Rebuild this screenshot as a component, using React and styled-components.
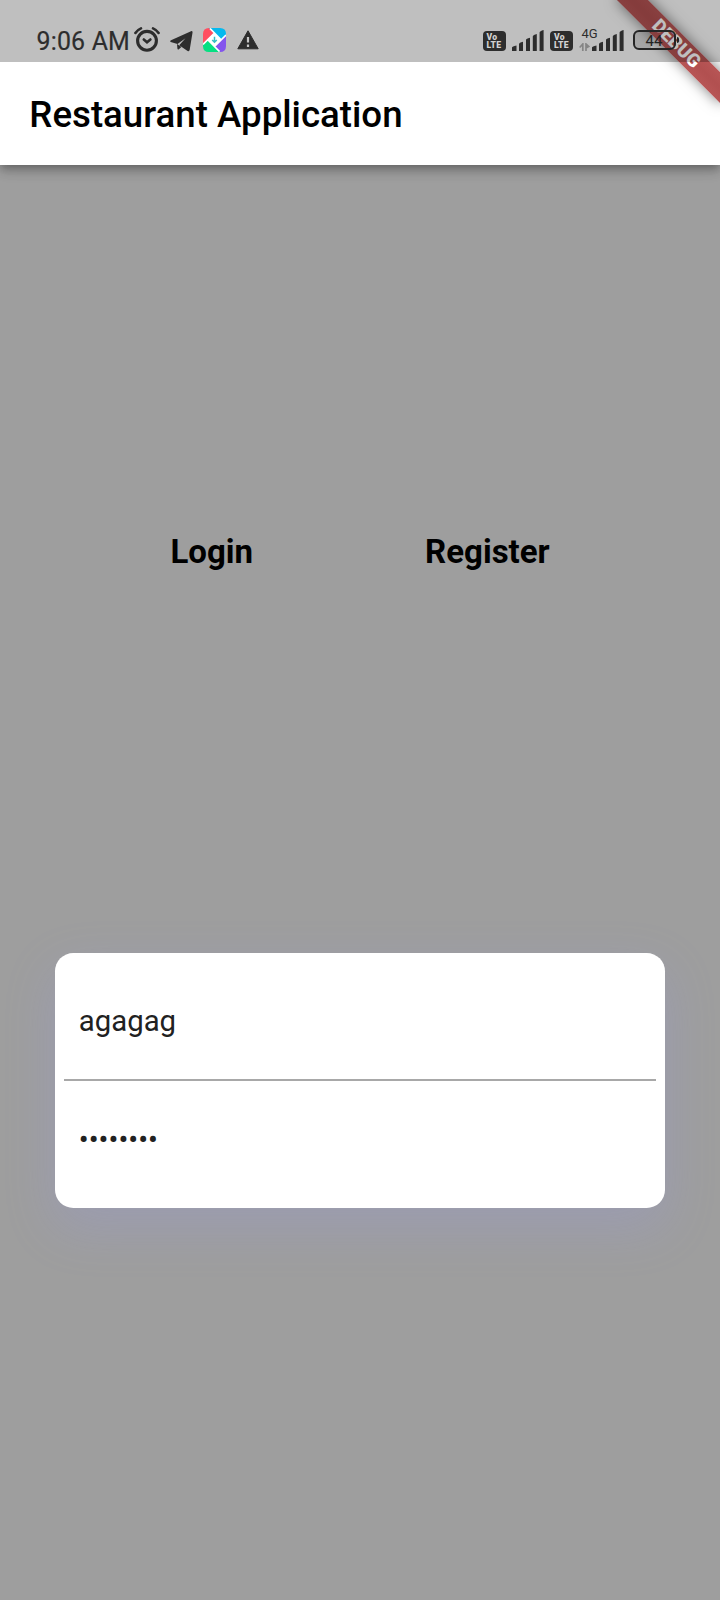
import React from 'react';
import styled, { createGlobalStyle } from 'styled-components';

const GlobalStyle = createGlobalStyle`
  * { box-sizing: border-box; }
  body {
    margin: 0;
    background: #9e9e9e;
    font-family: Roboto, "Liberation Sans", sans-serif;
  }
`;

const Screen = styled.div`
  position: relative;
  display: flex;
  flex-direction: column;
  width: 720px;
  height: 1600px;
  overflow: hidden;
  background: #9e9e9e;
`;

const Header = styled.header`
  position: relative;
  flex: none;
  height: 164.67px;
  background: #fff;
  box-shadow: 0 3.6px 7.3px -1.8px rgba(0, 0, 0, 0.2), 0 7.3px 9.2px rgba(0, 0, 0, 0.14),
    0 1.8px 18.3px rgba(0, 0, 0, 0.12);
`;

const StatusBar = styled.div`
  position: relative;
  z-index: 2;
  display: flex;
  align-items: flex-start;
  height: 62px;
  padding-left: 36.5px;
  background: rgba(0, 0, 0, 0.25);
  color: #2d2d2d;
`;

const Clock = styled.span`
  width: 97.5px;
  margin-top: 27px;
  font-size: 24.9px;
  line-height: 29px;
  letter-spacing: 0.2px;
  white-space: nowrap;
  -webkit-text-stroke: 0.2px #2d2d2d;
`;

const Glyph = styled.svg`
  display: block;
  flex: none;
  width: ${(p) => p.$w}px;
  height: ${(p) => p.$h}px;
  margin-top: ${(p) => p.$top}px;
  margin-left: ${(p) => p.$gap || 0}px;
`;

const VolteBadge = styled.div`
  display: flex;
  flex-direction: column;
  flex: none;
  width: 23px;
  height: 20px;
  margin-top: 30.5px;
  margin-left: ${(p) => p.$gap}px;
  padding: 2px 0 0 4px;
  border-radius: 4px;
  background: #2d2d2d;
  color: #d2d2d2;
  font-size: 8.6px;
  font-weight: 900;
  letter-spacing: 0.3px;
  line-height: 8px;
`;

const Network = styled.div`
  display: flex;
  flex-direction: column;
  flex: none;
  width: 14px;
  margin-left: 6px;
  padding-top: 27px;
  font-size: 13px;
  line-height: 14px;
  span { margin-left: 2.5px; white-space: nowrap; }
`;

const Battery = styled.div`
  position: relative;
  flex: none;
  width: 43px;
  height: 20px;
  margin-top: 30px;
  margin-left: 9px;
  border: 2px solid #252525;
  border-radius: 6px;
  background: linear-gradient(90deg, rgba(0, 0, 0, 0.13) 42%, transparent 42%);
  color: #222;
  font-size: 15px;
  line-height: 18px;
  text-align: center;
  &::after {
    content: '';
    position: absolute;
    right: -5px;
    top: 5px;
    width: 2px;
    height: 6px;
    border-radius: 0 2px 2px 0;
    background: #222;
  }
`;

const Title = styled.h1`
  margin: 0;
  padding-left: 29.33px;
  font-size: 36.67px;
  font-weight: 500;
  line-height: 105px;
  color: #000;
`;

const DebugBanner = styled.div`
  position: absolute;
  z-index: 1;
  top: 51.33px;
  left: 646.67px;
  width: 146.67px;
  height: 22px;
  transform: rotate(45deg);
  transform-origin: 73.33px -51.33px;
  background: linear-gradient(rgba(183, 28, 28, 0.63), rgba(183, 28, 28, 0.63)),
    linear-gradient(rgba(0, 0, 0, 0.28), rgba(0, 0, 0, 0.34), rgba(0, 0, 0, 0.28));
  box-shadow: 0 0 14px rgba(0, 0, 0, 0.5);
  color: #fff;
  font-size: 18.7px;
  font-weight: 900;
  line-height: 22px;
  text-align: center;
`;

const Actions = styled.div`
  display: flex;
  flex: none;
  height: 788px;
  padding: 367px 0 0 170.5px;
  gap: 172px;
`;

const TextButton = styled.button`
  height: 40px;
  padding: 0;
  border: 0;
  background: none;
  color: #000;
  font: 700 33px/40px Roboto, "Liberation Sans", sans-serif;
`;

const Card = styled.form`
  display: flex;
  flex-direction: column;
  flex: none;
  height: 255.3px;
  margin: 0 55px;
  padding: 9.17px;
  border-radius: 18.3px;
  background: #fff;
  box-shadow: 0 18.33px 50px 2px rgba(143, 148, 251, 0.2);
`;

const Field = styled.div`
  display: flex;
  height: ${(p) => (p.$ruled ? 119 : 117)}px;
  padding: 41px 0 0 14.67px;
  border-bottom: ${(p) => (p.$ruled ? '2px solid #a8a8a8' : '0')};
  color: #212121;
  font-size: 29.33px;
  line-height: 36px;
`;

const Value = styled.span`
  white-space: nowrap;
`;

const Signal = ({ gap }) => (
  <Glyph $w={32} $h={21} $top={30} $gap={gap} viewBox="0 0 32 21" fill="#2d2d2d">
    <path d="M0 17.5Q0 16.5 4.5 15.5V21H0zM7 14Q7 12.7 11 11.7V21H7zM14 10Q14 8.8 18 7.8V21H14zM20.8 6.2Q21 5 24.8 4V21H20.8zM27.6 2.5Q27.8 1 31.6 0V21H27.6z" />
  </Glyph>
);

const Volte = ({ gap }) => (
  <VolteBadge $gap={gap}>
    <span>Vo</span>
    <span>LTE</span>
  </VolteBadge>
);

export default function App() {
  return (
    <>
      <GlobalStyle />
      <Screen>
        <Header>
          <StatusBar>
            <Clock>9:06 AM</Clock>
            <Glyph $w={26} $h={25} $top={27} viewBox="0 0 26 25" fill="none" stroke="#2d2d2d" strokeLinecap="round">
              <circle cx="13" cy="13.8" r="9.4" strokeWidth="3.1" />
              <path d="M1.4 6Q3.4 2.9 7 1.4M24.6 6Q22.6 2.9 19 1.4" strokeWidth="2.6" />
              <path d="M9.8 12.5 13 15.3 16.4 12.5" strokeWidth="2.6" />
            </Glyph>
            <Glyph $w={23} $h={21} $top={30.5} $gap={10} viewBox="0 0 23 21" fill="#2d2d2d">
              <path d="M21 .2Q22.8-.3 22.5 1.8L19.7 18.8Q19.3 20.8 17.6 20L9.2 14.3 15.5 7.3 7.5 13 .7 10.9Q-.5 10.2 1 9.2Z" />
              <path d="M7 13 11.4 16 8.6 18.4Q7.6 19 7.4 17.5Z" />
            </Glyph>
            <Glyph $w={23} $h={24} $top={28} $gap={10} viewBox="0 0 23 24">
              <path d="M6 0H6.5L11.5 5 0 16V6Q0 0 6 0Z" fill="#ff4f61" />
              <path d="M6 0H17Q23 0 23 6V7L18 12Z" fill="#05b9ee" />
              <path d="M23 7V18Q23 24 17 24L11.5 18.5Z" fill="#8455ed" />
              <path d="M0 16.5 5 12 17 24H6Q0 24 0 18Z" fill="#06df82" />
              <path d="M11.5 5 18 11.8 11.5 18.5 5 11.8Z" fill="#fff" />
              <path d="M7 .5 18.3 12M23 7 11.5 18.5M16.5 23.5 5 12M0 16.5 11.5 5" fill="none" stroke="#fff" strokeWidth="1.7" />
              <path d="M11.5 8.8V14M9.2 12 11.5 14.2 13.8 12" fill="none" stroke="#36bfc5" strokeWidth="1.5" />
            </Glyph>
            <Glyph $w={22} $h={20} $top={30} $gap={10.5} viewBox="0 0 22 20">
              <path d="M11 .8 21.2 18.8H.8Z" fill="#2d2d2d" stroke="#2d2d2d" strokeLinejoin="round" />
              <path d="M11 7V12.5M11 14.5V17" stroke="#c7c7c7" strokeWidth="2.2" />
            </Glyph>
            <Volte gap={224} />
            <Signal gap={6} />
            <Volte gap={6.5} />
            <Network>
              <span>4G</span>
              <Glyph $w={11} $h={8} $top={2} viewBox="0 0 11 8" fill="none" stroke="#858585" strokeWidth="1.7">
                <path d="M3.8 8V1L.7 4.5M7 8V1L9.8 3.5 7 5" />
              </Glyph>
            </Network>
            <Signal gap={-1.5} />
            <Battery>44</Battery>
          </StatusBar>
          <Title>Restaurant Application</Title>
          <DebugBanner>DEBUG</DebugBanner>
        </Header>
        <Actions>
          <TextButton>Login</TextButton>
          <TextButton>Register</TextButton>
        </Actions>
        <Card>
          <Field $ruled>
            <Value>agagag</Value>
          </Field>
          <Field>
            <Value>••••••••</Value>
          </Field>
        </Card>
      </Screen>
    </>
  );
}
